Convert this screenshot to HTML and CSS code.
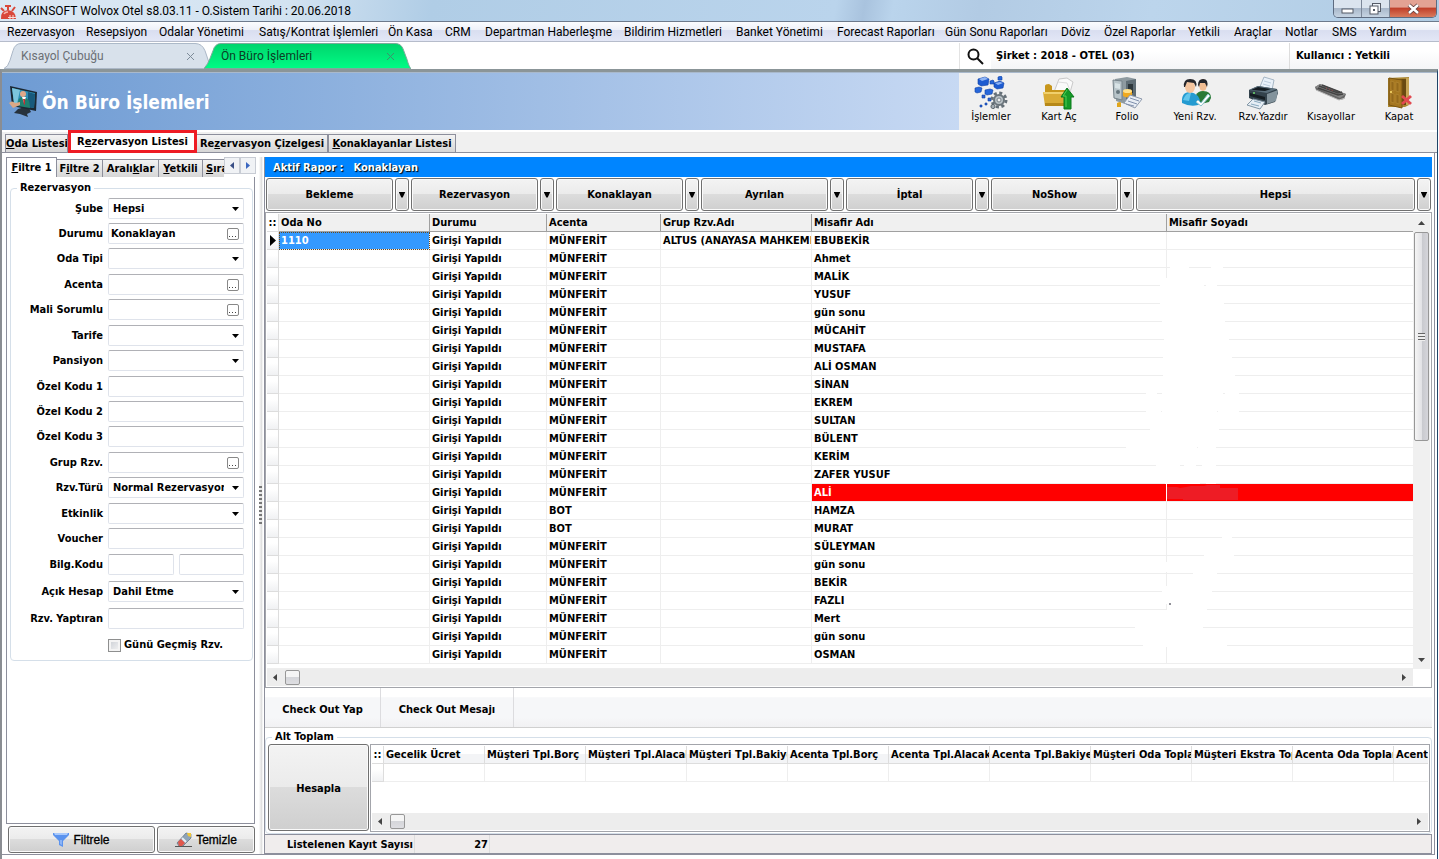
FILE: index.html
```html
<!DOCTYPE html>
<html lang="tr">
<head>
<meta charset="utf-8">
<title>AKINSOFT Wolvox Otel</title>
<link rel="stylesheet" href="styles.css">
</head>
<body>
<div class="window">
  <header class="titlebar">
    <svg class="app-icon" viewBox="0 0 17 18" width="17" height="18"><path d="M1 17 Q0 9 8 8 Q16 9 16 17Z" fill="#d9483b"/><path d="M1 6l3 3M8 8V4M15 5l-3 4" stroke="#d9483b" stroke-width="2"/><path d="M5 3h6v2H5z" fill="#d9483b"/><path d="M4 12q1-2 4-2" stroke="#f6b7ae" stroke-width="1.500" fill="none"/><path d="M8 15.500h8M10 13v4M13 13v4" stroke="#f9dcd8" stroke-width="1"/></svg>
    <span class="title-text">AKINSOFT Wolvox Otel s8.03.11 - O.Sistem Tarihi : 20.06.2018</span>
    <div class="window-buttons">
      <button class="wb" aria-label="Küçült"><svg width="13" height="10" viewBox="0 0 13 10"><rect x="1" y="5" width="11" height="4" fill="#fff" stroke="#555b66"/></svg></button>
      <button class="wb" aria-label="Önceki Boyut"><svg width="13" height="12" viewBox="0 0 13 12"><rect x="3.500" y=".5" width="8" height="8" fill="#eef3f8" stroke="#555b66"/><rect x="1" y="3" width="8" height="8" fill="#fff" stroke="#555b66"/><rect x="4" y="6" width="2" height="2" fill="#555b66"/></svg></button>
      <button class="wb wb-close" aria-label="Pencereyi Kapat"><svg width="13" height="12" viewBox="0 0 13 12"><path d="M2 2l9 8M11 2l-9 8" stroke="#5b3a3a" stroke-width="4"/><path d="M2 2l9 8M11 2l-9 8" stroke="#fff" stroke-width="2.500"/></svg></button>
    </div>
  </header>

  <nav class="menubar">
    <button class="w79">Rezervasyon</button><button class="w73">Resepsiyon</button><button class="w100">Odalar Yönetimi</button><button class="w129">Satış/Kontrat İşlemleri</button><button class="w57">Ön Kasa</button><button class="w40">CRM</button><button class="w139">Departman Haberleşme</button><button class="w112">Bildirim Hizmetleri</button><button class="w101">Banket Yönetimi</button><button class="w108">Forecast Raporları</button><button class="w116">Gün Sonu Raporları</button><button class="w43">Döviz</button><button class="w84">Özel Raporlar</button><button class="w46">Yetkili</button><button class="w51">Araçlar</button><button class="w47">Notlar</button><button class="w37">SMS</button><button class="w46">Yardım</button>
  </nav>

  <div class="docbar">
    <div class="doctabs">
      <div class="doctab">
        <svg class="doctab-shape" viewBox="0 0 207 27" preserveAspectRatio="none"><path d="M0 26.500Q4 25 6 18L9 8Q11 .5 17 .5H191Q198 .5 201 8L207 26.500Z" fill="#d8e1eb" stroke="#a9b6c6"/></svg>
        <button class="doctab-name">Kısayol Çubuğu</button><button class="doctab-close" aria-label="Kısayol Çubuğu sekmesini kapat"><svg width="9" height="9" viewBox="0 0 9 9"><path d="M1 1l7 7M8 1L1 8" stroke="#7d8b99"/></svg></button>
      </div>
      <div class="doctab doctab-on">
        <svg class="doctab-shape" viewBox="0 0 207 27" preserveAspectRatio="none"><defs><linearGradient id="tg" x1="0" y1="0" x2="0" y2="1"><stop offset="0" stop-color="#00d46c"/><stop offset="1" stop-color="#00fc85"/></linearGradient></defs><path d="M0 26.500Q4 22 6 16L9 8Q11 .5 17 .5H191Q197 .5 199 6L203 17Q205 25 207 26.500Z" fill="url(#tg)" stroke="#7ca89a"/></svg>
        <button class="doctab-name">Ön Büro İşlemleri</button><button class="doctab-close" aria-label="Ön Büro İşlemleri sekmesini kapat"><svg width="9" height="9" viewBox="0 0 9 9"><path d="M1 1l7 7M8 1L1 8" stroke="#3f8f6c"/></svg></button>
      </div>
    </div>
    <div class="session">
      <button class="search" aria-label="Ara"><svg width="17" height="17" viewBox="0 0 17 17"><circle cx="6.500" cy="6.500" r="5" fill="none" stroke="#111" stroke-width="2"/><path d="M10 10l6 6" stroke="#111" stroke-width="2"/></svg></button>
      <span class="company">Şirket : 2018 - OTEL (03)</span>
      <span class="user">Kullanıcı : Yetkili</span>
    </div>
  </div>

  <main class="frame">
    <section class="banner">
      <div class="banner-title">
        <svg width="29" height="33" viewBox="0 0 29 33"><path d="M9 24l10-3 3 6-4 2 1 3-8-3-6-1z" fill="#26323d"/><path d="M1 1l27 6-1 19-24-5z" fill="#1b2833"/><path d="M3 3l23 5-1 15-20-4z" fill="#2f8fb6"/><path d="M3 3l8 2-3 14-3-1z" fill="#7cc5dd"/><path d="M19 7l7 2-1 14-6-1z" fill="#185a7c"/><circle cx="14" cy="9" r="3" fill="#dfa889"/><path d="M9 21q-1-9 5-9 7 0 7 11z" fill="#1f7f6f"/><path d="M13 12l2 6 2-6z" fill="#fff"/><path d="M0 18q3-3 6 0l5-1v3l-7 3z" fill="#dca886"/><path d="M14 14l2 0 0 5-1 1z" fill="#c22f35"/></svg>
        <h1>Ön Büro İşlemleri</h1>
      </div>
      <div class="toolbar">
        <button><svg width="34" height="34" viewBox="0 0 34 34"><g stroke="#0e3fa5" stroke-width=".6"><path d="M4 3l7-2 4 2-1 6-7 1-3-2z" fill="#1d5bd0"/><path d="M20 7l6-2 4 2-1 5-6 1-3-2z" fill="#1d5bd0"/><path d="M1 12l4-1 3 1-1 4-4 1-2-1z" fill="#2767da"/><path d="M11 14l5-1 3 1-1 4-5 1-2-1z" fill="#2767da"/><path d="M24 1l3-1 1 1v3h-4z" fill="#2767da"/><path d="M16 5l3-1 1 1v3h-4z" fill="#2767da"/><path d="M8 19h3v3H8zM14 22h3v3h-3zM6 29h2v2H6zM11 27h2v2h-2z" fill="#2a62d6"/></g><path d="M5 3l6-2 3 2-6 2zM21 7l5-1 3 1-5 2z" fill="#8fb4f4"/><circle cx="25" cy="24" r="7" fill="none" stroke="#667078" stroke-width="3" stroke-dasharray="3 2.500"/><circle cx="25" cy="24" r="5" fill="#b9c1c6" stroke="#6b757c" stroke-width="2"/><circle cx="25" cy="24" r="2" fill="#f0f0f0" stroke="#79838a"/><path d="M17 30a2 2 0 1 0 4 1 2 2 0 1 0-4-1" fill="#a4adb4" stroke="#59636b"/></svg><span>İşlemler</span></button>
        <button><svg width="34" height="34" viewBox="0 0 34 34"><path d="M12 16L17 3l8-1 6 4-4 14z" fill="#fafafa" stroke="#c9c9c9"/><path d="M16 6l9 1 4 10" fill="none" stroke="#ddd"/><path d="M3 30V10q0-2 4-2l3 2v4h16v15z" fill="#c7961b"/><path d="M1 16h26l-1 14H3z" fill="#d9ab35"/><path d="M1 16h26v2H2z" fill="#f0d06c"/><path d="M3 27h23v3H3z" fill="#b68818"/><path d="M25 12l7 9h-3v12h-7V21h-3z" fill="#159a28" stroke="#0b7a1b"/><path d="M25 14l-4 6h3v11" stroke="#55cc55" fill="none"/></svg><span>Kart Aç</span></button>
        <button><svg width="34" height="34" viewBox="0 0 34 34"><path d="M5 3l12-2 9 2v20l-11 5-9-3z" fill="#8e9aa0"/><path d="M16 5l10-2v20l-10 5z" fill="#5f6d75"/><path d="M3 4l9 1v19l-8-2z" fill="#b8c4c9" stroke="#76838a"/><path d="M5 7l5 1v5l-5-1z" fill="#d8e3e6"/><circle cx="8" cy="16" r="2" fill="#66757c"/><path d="M18 8h5v9h-5z" fill="#2d373c"/><path d="M13 15q4-2 9 0v5q-4 3-9 0z" fill="#f0a91f"/><ellipse cx="17.500" cy="15" rx="4.500" ry="2" fill="#ffe08a"/><path d="M14 27l6-8 12 4-7 9z" fill="#e8edf4" stroke="#909bae"/><path d="M18 25l9 3M20 22l9 3M16 28l8 2" stroke="#8090ad"/><path d="M7 27q4-2 4 0v4H7z" fill="#e0a61d"/></svg><span>Folio</span></button>
        <button><svg width="34" height="34" viewBox="0 0 34 34"><path d="M18 25V19q2-4 7-4 8 0 8 7l-2 4-8 2z" fill="#287a37"/><ellipse cx="25" cy="9" rx="4" ry="6" fill="#f0bd93"/><path d="M20 9q0-6 5-6 6 0 4 8l-2-4-5 0-1 4z" fill="#23252b"/><path d="M4 27q-1-11 8-11 9 1 11 12-9 4-19-1z" fill="#249bd1"/><path d="M5 24q3-8 8-7l-2 8z" fill="#62c6ec"/><ellipse cx="12" cy="11" rx="5" ry="6" fill="#f4c59f"/><path d="M6 11q-1-8 6-8 8 0 6 8l-2-4-7-1-2 5z" fill="#25262b"/><path d="M20 24l3 3 7-9 2 2-9 10-5-4z" fill="#fff" stroke="#8ec4cd"/></svg><span>Yeni Rzv.</span></button>
        <button><svg width="34" height="34" viewBox="0 0 34 34"><path d="M13 13L18 1l10 3-2 10z" fill="#e9f1f9" stroke="#a6b6c4"/><path d="M18 5l7 2M17 8l7 2" stroke="#bccddd"/><path d="M3 14l9-4 19 3 1 4-3 9-10 3L3 22z" fill="#33424c"/><path d="M3 14l9-4 19 3-10 4z" fill="#5b6f7c"/><path d="M5 14l7-3 13 2-6 2z" fill="#141c22"/><path d="M21 18l11-4-2 11-9 3z" fill="#83939c"/><path d="M4 17l15 4v3L4 20z" fill="#151d22"/><path d="M1 29l6-6 12 3-5 7z" fill="#e6eef5" stroke="#8296a5"/><path d="M5 28l8 2M8 25l7 2" stroke="#89aac0"/><circle cx="8" cy="17" r="1" fill="#6fd96f"/></svg><span>Rzv.Yazdır</span></button>
        <button><svg width="34" height="34" viewBox="0 0 34 34"><path d="M1 11l5-3 26 10-2 5-5 1L2 14z" fill="#666"/><path d="M1 11l5-3 26 10-6 4z" fill="#858585"/><path d="M5 10l19 7 4-1M4 12l20 7 5-1M8 9l18 7" stroke="#444" stroke-width="1.500" fill="none"/><path d="M12 12l8 3" stroke="#a34b4b" stroke-dasharray="1 2"/><path d="M2 14l23 10 6-2" stroke="#bbb" fill="none"/></svg><span>Kısayollar</span></button>
        <button><svg width="34" height="34" viewBox="0 0 34 34"><path d="M6 2l21-1v28l-4 2H6z" fill="#aa8733"/><path d="M8 3h16v26H8z" fill="#6a4a10"/><path d="M7 2l13 2v28L7 29z" fill="#a57720" stroke="#7a5511"/><path d="M9 5l3 1v9l-3-1zM14 6l3 1v9l-3-1zM9 17l3 1v9l-3-1zM14 18l3 1v9l-3-1z" fill="#94691b" stroke="#b98d37" stroke-width=".6"/><path d="M24 2h3v27h-3z" fill="#c7a555"/><circle cx="9" cy="16" r="1" fill="#ffe070"/><path d="M20 20l9 8M29 20l-9 8" stroke="#e24a50" stroke-width="3"/></svg><span>Kapat</span></button>
      </div>
    </section>

    <nav class="pagetabs">
      <button class="pt-a"><u>O</u>da Listesi</button><button class="pt-on">R<u>e</u>zervasyon Listesi</button><button class="pt-b">Re<u>z</u>ervasyon Çizelgesi</button><button class="pt-c"><u>K</u>onaklayanlar Listesi</button>
    </nav>

    <div class="work">
      <aside class="filters">
        <div class="ftabs">
          <button class="ft ft-on"><u>F</u>iltre 1</button><button class="ft ft2">F<u>i</u>ltre 2</button><button class="ft ft3">Aralı<u>k</u>lar</button><button class="ft ft4"><u>Y</u>etkili</button><button class="ft ft5"><u>S</u>ıralama</button>
          <button class="fs" aria-label="Önceki"><svg width="4" height="7" viewBox="0 0 4 7"><path d="M4 0v7L0 3.500z" fill="#3a4f86"/></svg></button><button class="fs" aria-label="Sonraki"><svg width="4" height="7" viewBox="0 0 4 7"><path d="M0 0v7l4-3.500z" fill="#3a66c0"/></svg></button>
        </div>
        <form class="fpanel">
          <fieldset>
            <legend>Rezervasyon</legend>
            <div class="groups">
              <div class="group">
                <div class="field"><label for="sube">Şube</label><span class="box drop"><select id="sube"><option>Hepsi</option></select></span></div>
                <div class="field"><label for="durumu">Durumu</label><span class="box"><input id="durumu" value="Konaklayan"><button type="button" class="dots" aria-label="Durumu seç"></button></span></div>
                <div class="field"><label for="odatipi">Oda Tipi</label><span class="box drop"><select id="odatipi"><option></option></select></span></div>
              </div>
              <div class="group">
                <div class="field"><label for="acenta">Acenta</label><span class="box"><input id="acenta"><button type="button" class="dots" aria-label="Acenta seç"></button></span></div>
                <div class="field"><label for="mali">Mali Sorumlu</label><span class="box"><input id="mali"><button type="button" class="dots" aria-label="Mali Sorumlu seç"></button></span></div>
              </div>
              <div class="group">
                <div class="field"><label for="tarife">Tarife</label><span class="box drop"><select id="tarife"><option></option></select></span></div>
                <div class="field"><label for="pansiyon">Pansiyon</label><span class="box drop"><select id="pansiyon"><option></option></select></span></div>
              </div>
              <div class="group">
                <div class="field"><label for="ozel1">Özel Kodu 1</label><span class="box"><input id="ozel1"></span></div>
                <div class="field"><label for="ozel2">Özel Kodu 2</label><span class="box"><input id="ozel2"></span></div>
                <div class="field"><label for="ozel3">Özel Kodu 3</label><span class="box"><input id="ozel3"></span></div>
              </div>
              <div class="group">
                <div class="field"><label for="grup">Grup Rzv.</label><span class="box"><input id="grup"><button type="button" class="dots" aria-label="Grup Rzv. seç"></button></span></div>
                <div class="field"><label for="turu">Rzv.Türü</label><span class="box drop"><select id="turu"><option>Normal Rezervasyon</option></select></span></div>
              </div>
              <div class="group">
                <div class="field"><label for="etkinlik">Etkinlik</label><span class="box drop"><select id="etkinlik"><option></option></select></span></div>
                <div class="field"><label for="voucher">Voucher</label><span class="box"><input id="voucher"></span></div>
              </div>
              <div class="group group-loose">
                <div class="field"><label for="bilg">Bilg.Kodu</label><span class="box"><input id="bilg"></span><span class="box"><input id="bilg2" aria-label="Bilg.Kodu 2"></span></div>
                <div class="field"><label for="hesap">Açık Hesap</label><span class="box drop"><select id="hesap"><option>Dahil Etme</option></select></span></div>
                <div class="field"><label for="yaptiran">Rzv. Yaptıran</label><span class="box"><input id="yaptiran"></span></div>
                <div class="check"><input type="checkbox" id="gecmis"><label for="gecmis">Günü Geçmiş Rzv.</label></div>
              </div>
            </div>
          </fieldset>
        </form>
        <div class="factions">
          <button class="btn btn-filter"><svg width="16" height="16" viewBox="0 0 16 16"><path d="M0 1h16v2l-6 6v6l-4-2V9L0 3z" fill="#5b93ee"/><path d="M1 1h14l-1 2H2z" fill="#a9c9fb"/><path d="M7 8l2 0v5l-2-1z" fill="#8cb4f6"/></svg>Filtrele</button>
          <button class="btn btn-clear"><svg width="17" height="16" viewBox="0 0 17 16"><path d="M0 14h17v1H0z" fill="#555"/><path d="M11 1l5 1v4l-8 8H4l-2-3z" fill="#8fa4b8" stroke="#4f5e6d" stroke-width=".6"/><path d="M3 10l3-3 4 4-3 3H4z" fill="#e0574c"/><path d="M12 1l4 0v4l-3-1z" fill="#f0c63a"/><path d="M7 6l4 4" stroke="#e6eef5" stroke-width="2"/></svg>Temizle</button>
        </div>
      </aside>

      <div class="splitter"><span></span></div>

      <section class="report">
        <div class="report-title"><span>Aktif Rapor :</span><span>Konaklayan</span></div>
        <div class="status-buttons">
          <button class="btn sb">Bekleme</button><button class="btn arrow" aria-label="Bekleme seçenekleri"></button>
          <button class="btn sb">Rezervasyon</button><button class="btn arrow" aria-label="Rezervasyon seçenekleri"></button>
          <button class="btn sb">Konaklayan</button><button class="btn arrow" aria-label="Konaklayan seçenekleri"></button>
          <button class="btn sb">Ayrılan</button><button class="btn arrow" aria-label="Ayrılan seçenekleri"></button>
          <button class="btn sb">İptal</button><button class="btn arrow" aria-label="İptal seçenekleri"></button>
          <button class="btn sb">NoShow</button><button class="btn arrow" aria-label="NoShow seçenekleri"></button>
          <button class="btn sb-all">Hepsi</button><button class="btn arrow" aria-label="Hepsi seçenekleri"></button>
        </div>

        <div class="grid">
          <div class="grid-main">
            <table class="guests">
              <colgroup><col class="c0"><col class="c1"><col class="c2"><col class="c3"><col class="c4"><col class="c5"><col></colgroup>
              <thead><tr><th class="mark">::</th><th>Oda No</th><th>Durumu</th><th>Acenta</th><th>Grup Rzv.Adı</th><th>Misafir Adı</th><th>Misafir Soyadı</th></tr></thead>
              <tbody>
                <tr><td class="ind"><svg width="6" height="11" viewBox="0 0 6 11"><path d="M0 0v11l6-5.500z"/></svg></td><td class="sel">1110</td><td>Girişi Yapıldı</td><td>MÜNFERİT</td><td>ALTUS (ANAYASA MAHKEMESİ)</td><td>EBUBEKİR</td><td></td></tr>
                <tr><td class="ind"></td><td></td><td>Girişi Yapıldı</td><td>MÜNFERİT</td><td></td><td>Ahmet</td><td></td></tr>
                <tr><td class="ind"></td><td></td><td>Girişi Yapıldı</td><td>MÜNFERİT</td><td></td><td>MALİK</td><td></td></tr>
                <tr><td class="ind"></td><td></td><td>Girişi Yapıldı</td><td>MÜNFERİT</td><td></td><td>YUSUF</td><td></td></tr>
                <tr><td class="ind"></td><td></td><td>Girişi Yapıldı</td><td>MÜNFERİT</td><td></td><td>gün sonu</td><td></td></tr>
                <tr><td class="ind"></td><td></td><td>Girişi Yapıldı</td><td>MÜNFERİT</td><td></td><td>MÜCAHİT</td><td></td></tr>
                <tr><td class="ind"></td><td></td><td>Girişi Yapıldı</td><td>MÜNFERİT</td><td></td><td>MUSTAFA</td><td></td></tr>
                <tr><td class="ind"></td><td></td><td>Girişi Yapıldı</td><td>MÜNFERİT</td><td></td><td>ALİ OSMAN</td><td></td></tr>
                <tr><td class="ind"></td><td></td><td>Girişi Yapıldı</td><td>MÜNFERİT</td><td></td><td>SİNAN</td><td></td></tr>
                <tr><td class="ind"></td><td></td><td>Girişi Yapıldı</td><td>MÜNFERİT</td><td></td><td>EKREM</td><td></td></tr>
                <tr><td class="ind"></td><td></td><td>Girişi Yapıldı</td><td>MÜNFERİT</td><td></td><td>SULTAN</td><td></td></tr>
                <tr><td class="ind"></td><td></td><td>Girişi Yapıldı</td><td>MÜNFERİT</td><td></td><td>BÜLENT</td><td></td></tr>
                <tr><td class="ind"></td><td></td><td>Girişi Yapıldı</td><td>MÜNFERİT</td><td></td><td>KERİM</td><td></td></tr>
                <tr><td class="ind"></td><td></td><td>Girişi Yapıldı</td><td>MÜNFERİT</td><td></td><td>ZAFER YUSUF</td><td></td></tr>
                <tr><td class="ind"></td><td></td><td>Girişi Yapıldı</td><td>MÜNFERİT</td><td></td><td class="alert">ALİ</td><td class="alert"></td></tr>
                <tr><td class="ind"></td><td></td><td>Girişi Yapıldı</td><td>BOT</td><td></td><td>HAMZA</td><td></td></tr>
                <tr><td class="ind"></td><td></td><td>Girişi Yapıldı</td><td>BOT</td><td></td><td>MURAT</td><td></td></tr>
                <tr><td class="ind"></td><td></td><td>Girişi Yapıldı</td><td>MÜNFERİT</td><td></td><td>SÜLEYMAN</td><td></td></tr>
                <tr><td class="ind"></td><td></td><td>Girişi Yapıldı</td><td>MÜNFERİT</td><td></td><td>gün sonu</td><td></td></tr>
                <tr><td class="ind"></td><td></td><td>Girişi Yapıldı</td><td>MÜNFERİT</td><td></td><td>BEKİR</td><td></td></tr>
                <tr><td class="ind"></td><td></td><td>Girişi Yapıldı</td><td>MÜNFERİT</td><td></td><td>FAZLI</td><td></td></tr>
                <tr><td class="ind"></td><td></td><td>Girişi Yapıldı</td><td>MÜNFERİT</td><td></td><td>Mert</td><td></td></tr>
                <tr><td class="ind"></td><td></td><td>Girişi Yapıldı</td><td>MÜNFERİT</td><td></td><td>gün sonu</td><td></td></tr>
                <tr><td class="ind"></td><td></td><td>Girişi Yapıldı</td><td>MÜNFERİT</td><td></td><td>OSMAN</td><td></td></tr>
              </tbody>
            </table>
            <svg class="redact" width="130" height="400" viewBox="1120 260 130 400" aria-hidden="true">
              <g stroke="#fff" stroke-width="4" fill="none"><path d="M1170 267h19M1211 267h12M1160 285h44M1206 285h11M1160 303h64M1162 321h63M1167 339h62M1163 357h69M1163 375h72M1146 393h11M1162 393h61M1225 393h14M1146 411h15M1162 411h55M1218 411h21M1150 429h69M1126 447h71M1198 447h18M1156 465h24M1184 465h12M1202 465h14M1165 482h35M1206 482h10M1222 537h10M1204 555h30M1193 573h24M1162 591h50M1167 609h40M1135 627h68M1143 645h84"/><path d="M1166 278v204M1166 562v10M1166 586v18M1166 610v33"/></g>
              <path d="M1167 487h10l3 1 6-1 5-1h13l3-1h13v3h18v12h-55v-1h-16z" fill="#ee1c25"/>
              <path d="M1169 604h2" stroke="#223"/>
            </svg>
          </div>
          <div class="vscroll"><span class="tri up"></span><span class="thumb"></span><span class="tri down"></span></div>
          <div class="hscroll"><span class="tri left"></span><span class="hthumb"></span><span class="tri right"></span></div>
        </div>

        <div class="checkout"><button class="co1">Check Out Yap</button><button class="co2">Check Out Mesajı</button></div>

        <fieldset class="totals">
          <legend>Alt Toplam</legend>
          <div class="totals-row">
            <button class="btn calc">Hesapla</button>
            <div class="sumgrid">
              <table class="sums">
                <colgroup><col class="c0"><col class="s"><col class="s"><col class="s"><col class="s"><col class="s"><col class="s"><col class="s"><col class="s"><col class="s"><col class="s"><col></colgroup>
                <thead><tr><th class="mark">::</th><th>Gecelik Ücret</th><th>Müşteri Tpl.Borç</th><th>Müşteri Tpl.Alacak</th><th>Müşteri Tpl.Bakiye</th><th>Acenta Tpl.Borç</th><th>Acenta Tpl.Alacak</th><th>Acenta Tpl.Bakiye</th><th>Müşteri Oda Toplam</th><th>Müşteri Ekstra Toplam</th><th>Acenta Oda Toplam</th><th>Acenta Ekstra</th></tr></thead>
                <tbody><tr><td class="ind"></td><td></td><td></td><td></td><td></td><td></td><td></td><td></td><td></td><td></td><td></td><td></td></tr></tbody>
              </table>
              <div class="hscroll"><span class="tri left"></span><span class="hthumb"></span><span class="tri right"></span></div>
            </div>
          </div>
        </fieldset>

        <footer class="count"><span class="count-label">Listelenen Kayıt Sayısı</span><span class="count-value">27</span></footer>
      </section>
    </div>
  </main>
</div>
</body>
</html>
```
FILE: styles.css
```css
* { box-sizing: border-box; }
body { margin: 0; background: #fff; color: #000; font: bold 11px/14px "DejaVu Sans Condensed", "DejaVu Sans", sans-serif; }
button, input, select { font: inherit; color: inherit; margin: 0; padding: 0; border: 0; background: none; border-radius: 0; outline: 0; white-space: nowrap; }
svg { display: block; }

.window { display: flex; flex-direction: column; min-height: 100vh; }

/* title bar */
.titlebar { display: flex; align-items: center; height: 22px; border-bottom: 1px solid #6d7a8c; background: linear-gradient(100deg, #dbe8f4 0, #d3e3f1 20%, #b0cde6 30%, #bad4ec 58%, #a9c3de 60%, #bad4ec 62%, #b2cbe4 68%, #bcd5ec 80%, #b0cce4 100%); font: 12px/20px Roboto, "Open Sans", sans-serif; }
.app-icon { flex: none; }
.title-text { flex: 1; padding-left: 4px; }
.window-buttons { display: flex; align-self: flex-start; margin-right: 2px; height: 18px; border: 1px solid #5d6b80; border-top: 0; border-radius: 0 0 5px 5px; overflow: hidden; }
.wb { display: flex; align-items: center; justify-content: center; width: 28px; border-right: 1px solid #7b8798; background: linear-gradient(#dbe4ee 45%, #a9b8ca 50%, #c6d4e2); }
.wb-close { width: 46px; border: 0; background: linear-gradient(#e3a293 40%, #c1412b 50%, #d97a5c); }

/* menu */
.menubar { display: flex; height: 20px; padding-left: 7px; border-bottom: 1px solid #b6bccb; background: linear-gradient(#fbfcfe, #eef1f9 40%, #d9def0 45%, #e3e7f6); font: 12px/20px Roboto, "Open Sans", sans-serif; }
.menubar button { text-align: left; flex: none; }
.w79 { width: 79px; } .w73 { width: 73px; } .w100 { width: 100px; } .w129 { width: 129px; } .w57 { width: 57px; } .w40 { width: 40px; }
.w139 { width: 139px; } .w112 { width: 112px; } .w101 { width: 101px; } .w108 { width: 108px; } .w116 { width: 116px; } .w43 { width: 43px; }
.w84 { width: 84px; } .w46 { width: 46px; } .w51 { width: 51px; } .w47 { width: 47px; } .w37 { width: 37px; }

/* document tabs */
.docbar { display: flex; justify-content: space-between; height: 27px; padding-top: 1px; background: #fff; }
.doctabs { display: flex; padding-left: 4px; font: 12px/26px Roboto, "Open Sans", sans-serif; }
.doctab { position: relative; display: flex; align-items: center; justify-content: space-between; width: 200px; padding: 0 9px 0 17px; color: #6b6f75; }
.doctab-on { color: #0b3d25; }
.doctab-shape { position: absolute; left: 0; top: 0; width: 207px; height: 26px; }
.doctab-name, .doctab-close { position: relative; }
.session { display: flex; align-items: stretch; width: 480px; border-left: 1px solid #e3e3e3; font-family: "DejaVu Sans", sans-serif; font-size: 10px; line-height: 26px; }
.search { width: 31px; padding-left: 7px; }
.company { flex: 1; padding-left: 5px; background: linear-gradient(#fff 30%, #f4f5f7); }
.user { width: 150px; padding-left: 6px; border-left: 1px solid #ddd; background: linear-gradient(#fff 30%, #f4f5f7); }

/* child window */
.frame { flex: 1; display: flex; flex-direction: column; margin-right: 1px; border-top: 3px solid #8b9598; border-left: 2px solid #8a8d92; border-right: 1px solid #1f4468; padding-bottom: 4px; }
.banner { display: flex; justify-content: space-between; height: 58px; border-top: 1px solid #a9b9cc; background: #f0f0f0; }
.banner-title { flex: 1; display: flex; align-items: center; gap: 4px; padding-left: 7px; background: linear-gradient(90deg, #6e9bd3, #c7d9f3); }
.banner-title h1 { margin: 0; color: #fff; font-size: 19px; line-height: 24px; }
.toolbar { display: flex; width: 478px; font: 11px/14px "DejaVu Sans Condensed", sans-serif; }
.toolbar button { display: flex; flex-direction: column; align-items: center; width: 68px; padding: 3px 4px 0 0; }

.pagetabs { display: flex; align-items: flex-end; height: 23px; padding-left: 3px; border-top: 2px solid #fff; border-bottom: 1px solid #8d8f9c; background: #f0f0f0; }
.pagetabs button { height: 18px; border: 1px solid #8d8f9c; border-bottom: 0; background: linear-gradient(#f3f3f3, #d6d6d6); overflow: hidden; }
.pagetabs .pt-a { width: 63px; }
.pagetabs .pt-on { width: 129px; height: 23px; margin-bottom: -1px; border: 3px solid #ee1c25; background: #fff; }
.pagetabs .pt-b { width: 131px; border-left: 0; }
.pagetabs .pt-c { width: 128px; }

.work { flex: 1; display: flex; padding-top: 4px; border-right: 1px solid #8d8f9c; border-bottom: 1px solid #8d8f9c; margin-right: 2px; }

/* filters */
.filters { flex: none; display: flex; flex-direction: column; width: 255px; padding-left: 4px; }
.ftabs { display: flex; align-items: flex-end; height: 20px; }
.ft { height: 18px; border: 1px solid #8d8f9c; border-bottom: 0; border-left-width: 0; background: linear-gradient(#f3f3f3, #d6d6d6); overflow: hidden; }
.ft-on { width: 51px; height: 20px; border-left-width: 1px; background: #fff; }
.ft2 { width: 46px; } .ft3 { width: 56px; } .ft4 { width: 44px; }
.ft5 { width: 21px; padding-left: 3px; border-right: 0; text-align: left; }
.fs { display: flex; align-items: center; justify-content: center; align-self: flex-start; width: 16px; height: 17px; border: 1px solid #c8ccd4; background: #f0f2f5; }
.fpanel { flex: 1; width: 249px; padding: 4px 1px 0 3px; border: 1px solid #8d8f9c; border-top: 0; }
.fpanel fieldset { min-width: 0; margin: 0; padding: 0 8px 8px 0; border: 1px solid #d5dfe9; border-radius: 4px; }
fieldset legend { margin-left: 6px; padding: 0 3px; line-height: 14px; }
.groups { display: flex; flex-direction: column; gap: 5px; padding-top: 3px; }
.group { display: flex; flex-direction: column; gap: 4px; }
.group-loose { gap: 6px; }
.field { display: flex; gap: 5px; }
.field label { flex: none; width: 92px; text-align: right; line-height: 21px; white-space: nowrap; }
.box { flex: 1; position: relative; display: flex; align-items: center; min-width: 0; height: 21px; border: 1px solid #dfe3eb; border-top-color: #b0b1b6; border-radius: 2px; background: #fff; }
.box input { flex: 1; width: 100%; min-width: 0; padding-left: 2px; height: 19px; }
.box select { appearance: none; flex: 1; min-width: 0; height: 19px; margin-right: 19px; padding-left: 4px; overflow: hidden; text-overflow: clip; }
.drop::after { content: ""; position: absolute; right: 4px; top: 8px; width: 7px; height: 4px; background: #000; clip-path: polygon(0 0, 100% 0, 50% 100%); }
.dots { flex: none; width: 12px; height: 12px; margin-right: 4px; border: 1px solid #888; border-radius: 2px; background: radial-gradient(circle at 50% 50%, #444 0 1px, transparent 1px) 0 6px / 3px 3px repeat-x, #fff; }
.check { display: flex; align-items: center; gap: 3px; padding: 3px 0 0 97px; }
.check input { appearance: none; width: 13px; height: 13px; border: 1px solid #8e8f8f; background: linear-gradient(135deg, #c9cdd3, #f6f6f6); box-shadow: inset 0 0 0 2px #f4f4f4; }
.factions { display: flex; gap: 2px; padding: 2px 0 0 2px; height: 30px; }

.btn { border: 1px solid #707070; border-radius: 3px; background: linear-gradient(#f3f3f3, #ebebeb 49%, #dcdcdc 50%, #cfcfcf); box-shadow: inset 0 0 0 1px #fafafa; }
.factions .btn { display: flex; align-items: center; justify-content: center; gap: 4px; height: 27px; font: 12px/14px "Liberation Sans", sans-serif; -webkit-text-stroke: .3px #000; }
.btn-filter { width: 147px; }
.btn-clear { width: 98px; }

.splitter { flex: none; display: flex; align-items: center; width: 8px; padding-left: 2px; background: linear-gradient(90deg, #fff 25%, #d8d8d8 75%, #fff 80%); border-right: 1px solid #8d8f9c; }
.splitter span { width: 3px; height: 39px; background: repeating-linear-gradient(#777 0 2px, transparent 2px 4px); }

/* report */
.report { flex: 1; min-width: 0; display: flex; flex-direction: column; margin-right: 2px; }
.report-title { display: flex; gap: 10px; height: 21px; padding-left: 8px; border-bottom: 1px solid #fff; background: #0085ff; color: #fff; line-height: 21px; text-shadow: 1px 1px 1px #000; }
.status-buttons { display: flex; gap: 2px; height: 34px; padding: 0 1px; }
.status-buttons .btn { height: 33px; }
.sb { flex: none; width: 127px; }
.sb-all { flex: 1; }
.arrow { flex: none; display: flex; align-items: center; justify-content: center; width: 14px; }
.arrow::after { content: ""; width: 7px; height: 6px; background: #000; clip-path: polygon(0 0, 100% 0, 60% 100%, 40% 100%); }

.grid { flex: 1; display: grid; grid-template: 1fr 18px / 1fr 17px; border: 1px solid #a3a5ab; padding: 1px 1px 0; }
.grid-main { position: relative; min-width: 0; min-height: 455px; border-bottom: 1px solid #eee; }
table { width: 100%; table-layout: fixed; border-collapse: separate; border-spacing: 0; }
.c0 { width: 12px; } .c1 { width: 151px; } .c2 { width: 117px; } .c3 { width: 114px; } .c4 { width: 151px; } .c5 { width: 355px; } .s { width: 101px; }
th, td { height: 18px; padding: 0 0 0 2px; overflow: hidden; white-space: nowrap; text-align: left; line-height: 16px; font-weight: bold; border-right: 1px solid #eee; border-bottom: 1px solid #eee; }
th { background: #f0f0f0; border-right-color: #a0a0a0; border-bottom-color: #a0a0a0; }
th:last-child, td:last-child { border-right: 0; }
.mark, .sums .mark { padding: 0; background: #fff; border-color: #ddd; text-align: center; }
.ind { padding: 0 0 0 3px; background: linear-gradient(#fff 30%, #f0f1f3); border-color: #ddd; }
.sel { background: #3399ff; color: #fff; outline: 1px dotted #6b4a1c; outline-offset: -1px; }
.alert { background: #f00; color: #fff; border-right-color: #fff; }
.redact { position: absolute; left: 853px; top: 46px; }

.vscroll { display: flex; flex-direction: column; align-items: center; background: #f0f0f0; }
.vscroll .thumb { width: 15px; height: 209px; margin-top: 7px; border: 1px solid #979797; border-radius: 2px; background: repeating-linear-gradient(#666 0 1px, #eee 1px 3px) center / 7px 8px no-repeat, linear-gradient(90deg, #f5f5f5, #e3e3e6 50%, #c9cacf 55%, #d5d5da); }
.tri { flex: none; background: #444; }
.up { width: 7px; height: 4px; margin-top: 7px; clip-path: polygon(50% 0, 100% 100%, 0 100%); }
.down { width: 7px; height: 4px; margin: auto 0 7px; clip-path: polygon(0 0, 100% 0, 50% 100%); }
.left { width: 4px; height: 7px; margin-left: 6px; clip-path: polygon(100% 0, 100% 100%, 0 50%); }
.right { width: 4px; height: 7px; margin: 0 7px 0 auto; clip-path: polygon(0 0, 100% 50%, 0 100%); }
.hscroll { display: flex; align-items: center; height: 17px; background: #ededed; }
.hthumb { width: 15px; height: 15px; margin-left: 8px; border: 1px solid #979797; border-radius: 2px; background: linear-gradient(#f5f5f5 45%, #d5d6da 50%, #dedee2); }

.checkout { display: flex; height: 40px; border-bottom: 1px solid #d0d0d0; background: linear-gradient(#fff 22%, #f6f7f9 25%, #f6f7f9 75%, #f1f1f3); }
.checkout button { padding-top: 4px; border-right: 1px solid #dcdcdf; }
.co1 { width: 116px; } .co2 { width: 133px; }

.totals { min-width: 0; margin: 2px 0 0; padding: 0 1px 1px 2px; border: 1px solid #d5dfe9; border-radius: 4px; }
.totals legend { margin-left: 4px; }
.totals-row { display: flex; gap: 1px; }
.calc { flex: none; width: 101px; height: 87px; padding-top: 2px; }
.sumgrid { flex: 1; min-width: 0; display: flex; flex-direction: column; justify-content: space-between; height: 88px; border: 1px solid #a3a5ab; padding: 1px; }
.sums th { background: linear-gradient(#fff 45%, #f3f4f6 50%); border-color: #ddd; }

.count { display: flex; height: 20px; border: 1px solid #8d8f9c; border-left: 0; background: #f0eded; line-height: 20px; }
.count-label { width: 150px; padding-right: 1px; border-right: 1px solid #ddd; text-align: right; }
.count-value { width: 75px; padding-right: 1px; border-right: 1px solid #ddd; text-align: right; }
```
